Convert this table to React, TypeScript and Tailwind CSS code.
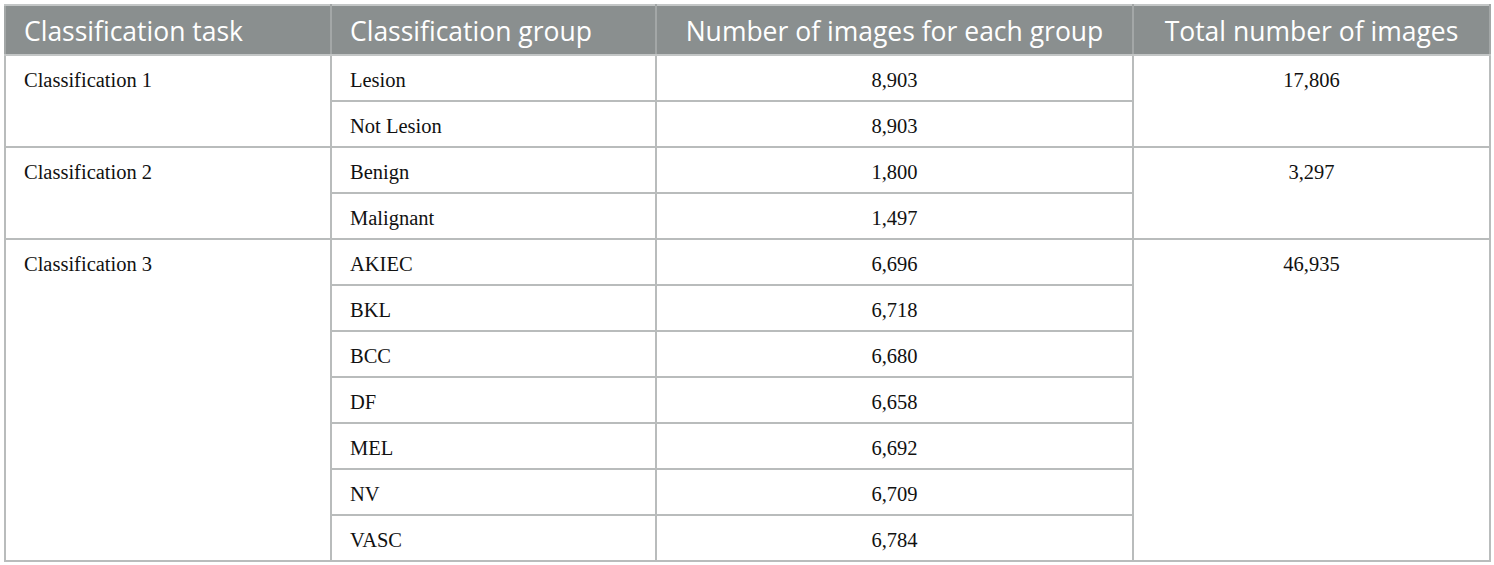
const rows = [
  { task: 'Classification 1', total: '17,806', groups: [['Lesion', '8,903'], ['Not Lesion', '8,903']] },
  { task: 'Classification 2', total: '3,297', groups: [['Benign', '1,800'], ['Malignant', '1,497']] },
  {
    task: 'Classification 3',
    total: '46,935',
    groups: [
      ['AKIEC', '6,696'],
      ['BKL', '6,718'],
      ['BCC', '6,680'],
      ['DF', '6,658'],
      ['MEL', '6,692'],
      ['NV', '6,709'],
      ['VASC', '6,784'],
    ],
  },
];

const cell = 'border-2 border-[#b9bcbc] h-[46px] px-[18px] align-top pt-[12px] text-[20.5px] leading-[24px] text-[#111]';

export default function App() {
  return (
    <div className="bg-white w-[1494px] h-[565px] pt-[4px] pl-[4px]">
      <table
        className="table-fixed border-collapse w-[1485px] border-2 border-[#c3c6c6]"
        style={{ fontFamily: '"Liberation Serif", serif' }}
      >
        <colgroup>
          <col className="w-[326px]" />
          <col className="w-[325px]" />
          <col className="w-[477px]" />
          <col className="w-[357px]" />
        </colgroup>
        <thead>
          <tr className="bg-[#8a8f8f] text-white h-[50px]">
            {['Classification task', 'Classification group', 'Number of images for each group', 'Total number of images'].map(
              (h, i) => (
                <th
                  key={h}
                  className={`border-2 border-x-[#a3a7a7] border-y-[#c3c6c6] px-[18px] pt-[2px] font-normal text-[26.5px] leading-[30px] ${
                    i < 2 ? 'text-left' : 'text-center'
                  }`}
                  style={{ fontFamily: '"Open Sans", sans-serif', fontVariantLigatures: 'none' }}
                >
                  {h}
                </th>
              )
            )}
          </tr>
        </thead>
        <tbody>
          {rows.map((r) =>
            r.groups.map(([g, n], j) => (
              <tr key={r.task + g}>
                {j === 0 && (
                  <td rowSpan={r.groups.length} className={cell}>
                    {r.task}
                  </td>
                )}
                <td className={cell}>{g}</td>
                <td className={`${cell} text-center`}>{n}</td>
                {j === 0 && (
                  <td rowSpan={r.groups.length} className={`${cell} text-center`}>
                    {r.total}
                  </td>
                )}
              </tr>
            ))
          )}
        </tbody>
      </table>
    </div>
  );
}
